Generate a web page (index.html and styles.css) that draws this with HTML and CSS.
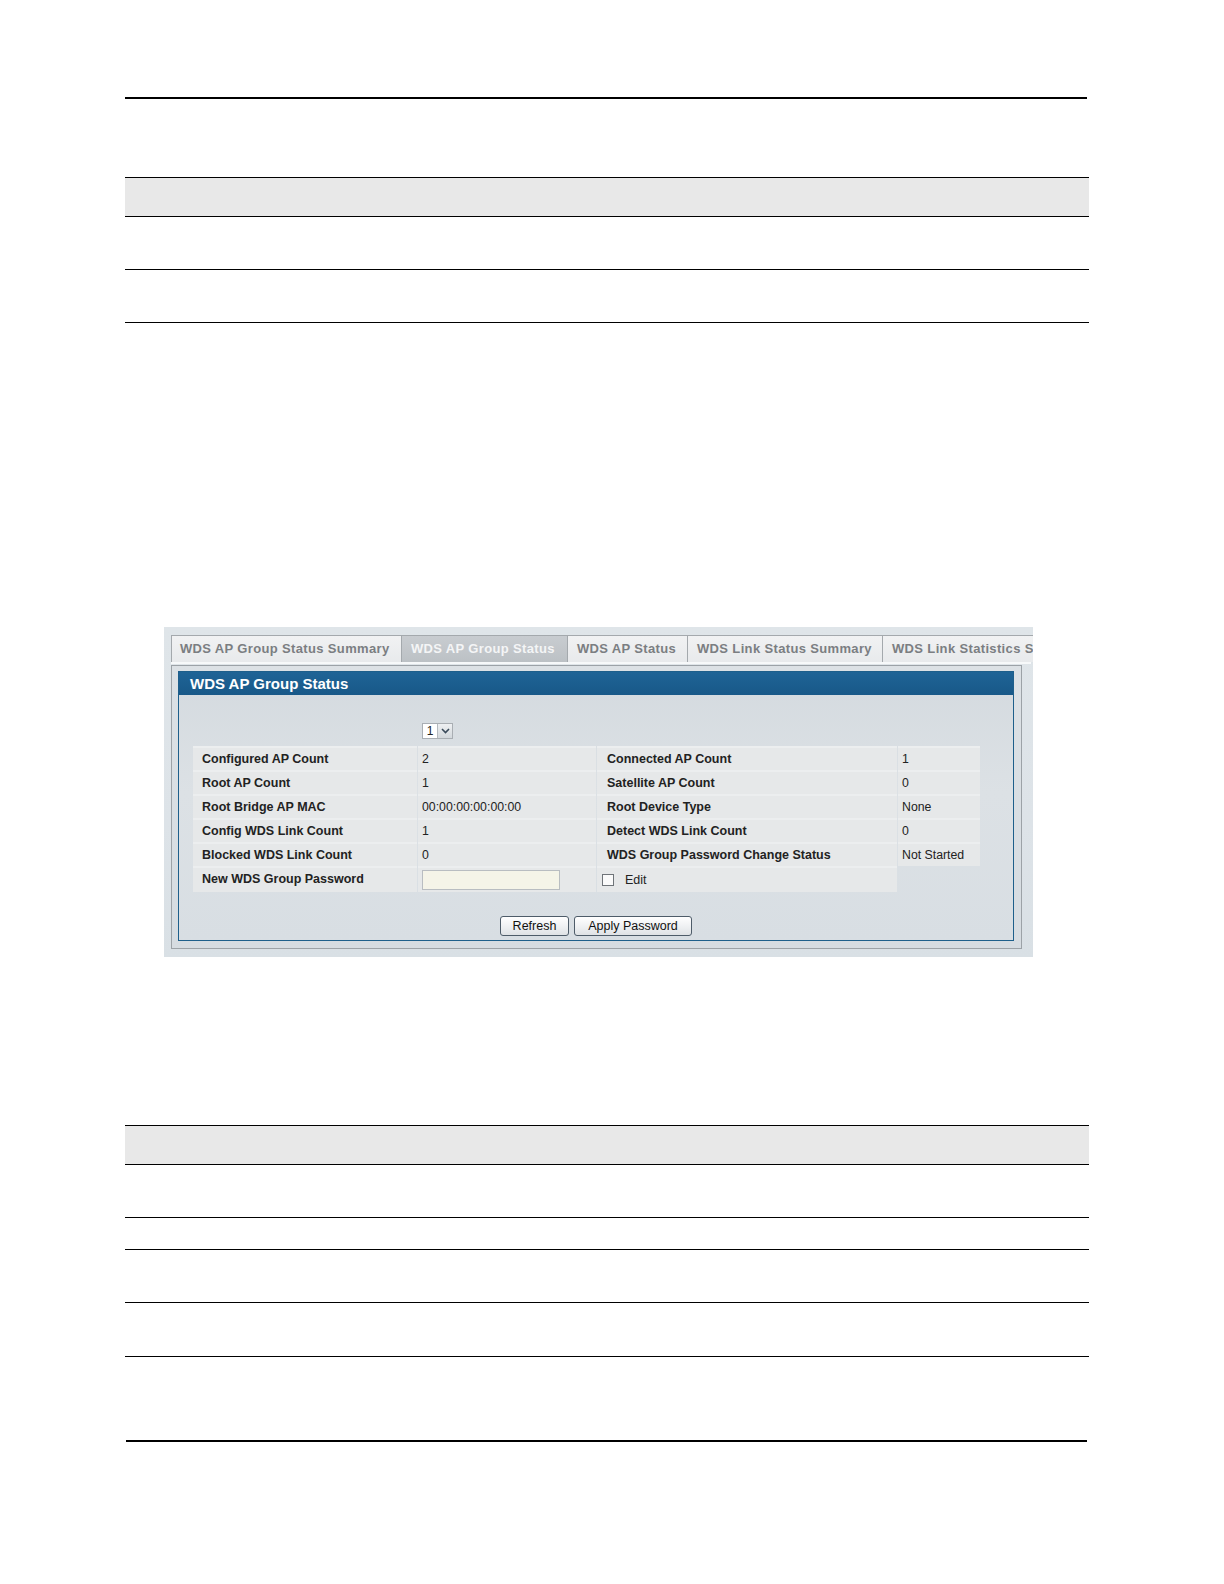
FILE: index.html
```html
<!DOCTYPE html>
<html lang="en">
<head>
<meta charset="utf-8">
<title>WDS AP Group Status</title>
<link rel="stylesheet" href="styles.css">
</head>
<body>
<div class="page">
  <div class="rule rule-top"></div>

  <div class="doc-table t1">
    <div class="dt-head"></div>
    <div class="dt-row h52"></div>
    <div class="dt-row h52"></div>
  </div>

  <div class="shot">
    <div class="tabs">
      <div class="tab w1">WDS AP Group Status Summary</div>
      <div class="tab w2 active">WDS AP Group Status</div>
      <div class="tab w3">WDS AP Status</div>
      <div class="tab w4">WDS Link Status Summary</div>
      <div class="tab w5">WDS Link Statistics Summary</div>
    </div>
    <div class="panel">
      <div class="box">
        <div class="box-title">WDS AP Group Status</div>
        <div class="box-body">
          <div class="select-row">
            <div class="select">
              <span class="select-val">1</span>
              <span class="select-btn">
                <svg width="9" height="6" viewBox="0 0 9 6"><path d="M1 1 L4.5 4.5 L8 1" fill="none" stroke="#3a4a5a" stroke-width="1.6"/></svg>
              </span>
            </div>
          </div>
          <div class="grid">
            <div class="row">
              <div class="cell lbl">Configured AP Count</div>
              <div class="cell val">2</div>
              <div class="cell lbl2">Connected AP Count</div>
              <div class="cell val2">1</div>
            </div>
            <div class="row">
              <div class="cell lbl">Root AP Count</div>
              <div class="cell val">1</div>
              <div class="cell lbl2">Satellite AP Count</div>
              <div class="cell val2">0</div>
            </div>
            <div class="row">
              <div class="cell lbl">Root Bridge AP MAC</div>
              <div class="cell val">00:00:00:00:00:00</div>
              <div class="cell lbl2">Root Device Type</div>
              <div class="cell val2">None</div>
            </div>
            <div class="row">
              <div class="cell lbl">Config WDS Link Count</div>
              <div class="cell val">1</div>
              <div class="cell lbl2">Detect WDS Link Count</div>
              <div class="cell val2">0</div>
            </div>
            <div class="row">
              <div class="cell lbl">Blocked WDS Link Count</div>
              <div class="cell val">0</div>
              <div class="cell lbl2">WDS Group Password Change Status</div>
              <div class="cell val2">Not Started</div>
            </div>
            <div class="row last">
              <div class="cell lbl">New WDS Group Password</div>
              <div class="cell val"><span class="input"></span></div>
              <div class="cell edit"><span class="checkbox"></span><span>Edit</span></div>
            </div>
          </div>
          <div class="buttons">
            <button class="btn b-refresh">Refresh</button>
            <button class="btn b-apply">Apply Password</button>
          </div>
        </div>
      </div>
    </div>
  </div>

  <div class="doc-table t2">
    <div class="dt-head"></div>
    <div class="dt-row h52"></div>
    <div class="dt-row h31"></div>
    <div class="dt-row h52"></div>
    <div class="dt-row h53"></div>
  </div>

  <div class="rule rule-bottom"></div>
</div>
</body>
</html>
```

FILE: styles.css
```css
html, body {
  margin: 0;
  padding: 0;
  background: #ffffff;
}

body {
  font-family: "Liberation Sans", Arial, sans-serif;
  color: #222;
}

.page {
  width: 1224px;
  min-height: 1584px;
  padding-top: 97px;
  box-sizing: border-box;
}

.rule {
  height: 2px;
  background: #000;
}

.rule-top {
  margin-left: 125px;
  width: 962px;
}

.rule-bottom {
  margin-top: 83px;
  margin-left: 126px;
  width: 961px;
}

.doc-table {
  margin-left: 125px;
  width: 964px;
  border-top: 1px solid #000;
}

.t1 {
  margin-top: 78px;
}

.t2 {
  margin-top: 168px;
}

.dt-head {
  height: 38px;
  background: #e8e8e8;
  border-bottom: 1px solid #000;
}

.dt-row {
  border-bottom: 1px solid #000;
}

.h52 { height: 52px; }
.h31 { height: 31px; }
.h53 { height: 53px; }

/* ---------- screenshot ---------- */

.shot {
  margin-top: 304px;
  margin-left: 164px;
  width: 869px;
  height: 330px;
  box-sizing: border-box;
  padding: 8px 0 0 7px;
  overflow: hidden;
  background: linear-gradient(180deg, #dfe5e9 0%, #dde3e8 60%, #d9e0e5 100%);
}

.tabs {
  display: flex;
  height: 27px;
  border-bottom: 2px solid #f7f9fa;
  width: 860px;
  white-space: nowrap;
}

.tab {
  flex: none;
  box-sizing: border-box;
  height: 27px;
  padding-left: 8px;
  line-height: 26px;
  font-size: 13px;
  font-weight: bold;
  letter-spacing: 0.35px;
  color: #7b7e82;
  background: linear-gradient(180deg, #f1f2f3 0%, #e8eaec 100%);
  border: 1px solid #a4a9ad;
  border-bottom: none;
  border-right: none;
  overflow: hidden;
}

.tab.active {
  background: linear-gradient(180deg, #c8ccd0 0%, #bcc1c5 100%);
  color: #f4f5f6;
  padding-left: 9px;
}

.w1 { width: 230px; }
.w2 { width: 166px; }
.w3 { width: 120px; padding-left: 9px; }
.w4 { width: 195px; padding-left: 9px; }
.w5 { width: 200px; padding-left: 9px; }

.panel {
  margin-top: 1px;
  width: 851px;
  box-sizing: border-box;
  border: 1px solid #9ca2a7;
  padding: 5px 7px 7px 6px;
  background: linear-gradient(180deg, #dce1e5 0%, #d6dce1 100%);
}

.box {
  border: 1px solid #1e5f8b;
  background: linear-gradient(180deg, #d4dadf 0%, #dce1e5 45%, #d8dee3 100%);
}

.box-title {
  height: 23px;
  line-height: 23px;
  padding-left: 11px;
  background: linear-gradient(180deg, #1f6496 0%, #185888 100%);
  color: #ffffff;
  font-size: 15px;
  font-weight: bold;
}

.box-body {
  padding: 28px 0 4px 14px;
}

.select-row {
  height: 16px;
  padding-left: 229px;
  margin-bottom: 7px;
}

.select {
  display: inline-flex;
  height: 16px;
  width: 31px;
  box-sizing: border-box;
  border: 1px solid #a9aeb3;
  background: #ffffff;
  vertical-align: top;
}

.select-val {
  width: 14px;
  text-align: center;
  font-size: 12px;
  line-height: 14px;
  color: #222;
}

.select-btn {
  flex: 1;
  display: flex;
  align-items: center;
  justify-content: center;
  background: linear-gradient(180deg, #eef0f2 0%, #d3d8dc 100%);
  border-left: 1px solid #b5babf;
}

.grid {
  display: flex;
  flex-direction: column;
}

.row {
  display: grid;
  grid-template-columns: 224px 178px 300px 82px;
  column-gap: 1px;
}

.cell {
  height: 22px;
  line-height: 22px;
  border-top: 2px solid #eceeef;
  background: #e6e8e9;
  font-size: 12.5px;
  white-space: nowrap;
  overflow: hidden;
}

.lbl {
  padding-left: 9px;
  font-weight: bold;
  color: #222;
}

.lbl2 {
  padding-left: 10px;
  font-weight: bold;
  color: #222;
}

.val, .val2 {
  padding-left: 4px;
  font-size: 12.3px;
  color: #222;
}

.row.last .cell {
  height: 24px;
  line-height: 22px;
}

.input {
  display: inline-block;
  width: 138px;
  height: 20px;
  box-sizing: border-box;
  margin-top: 2px;
  vertical-align: top;
  border: 1px solid #b9bdc1;
  background: #f5f4e8;
}

.edit {
  display: flex;
  align-items: center;
  padding-left: 5px;
  font-size: 12.5px;
}

.checkbox {
  width: 12px;
  height: 12px;
  box-sizing: border-box;
  border: 1px solid #6f7479;
  background: #fafafa;
  margin-right: 11px;
}

.buttons {
  display: flex;
  justify-content: center;
  gap: 5px;
  margin-top: 24px;
  padding-right: 14px;
}

.btn {
  height: 20px;
  box-sizing: border-box;
  padding: 0;
  border: 1px solid #4e5c69;
  border-radius: 3px;
  background: linear-gradient(180deg, #ffffff 0%, #eef0f2 55%, #dfe2e5 100%);
  font-family: "Liberation Sans", Arial, sans-serif;
  font-size: 12.5px;
  color: #111;
  line-height: 18px;
}

.b-refresh { width: 69px; }
.b-apply { width: 118px; }
```
